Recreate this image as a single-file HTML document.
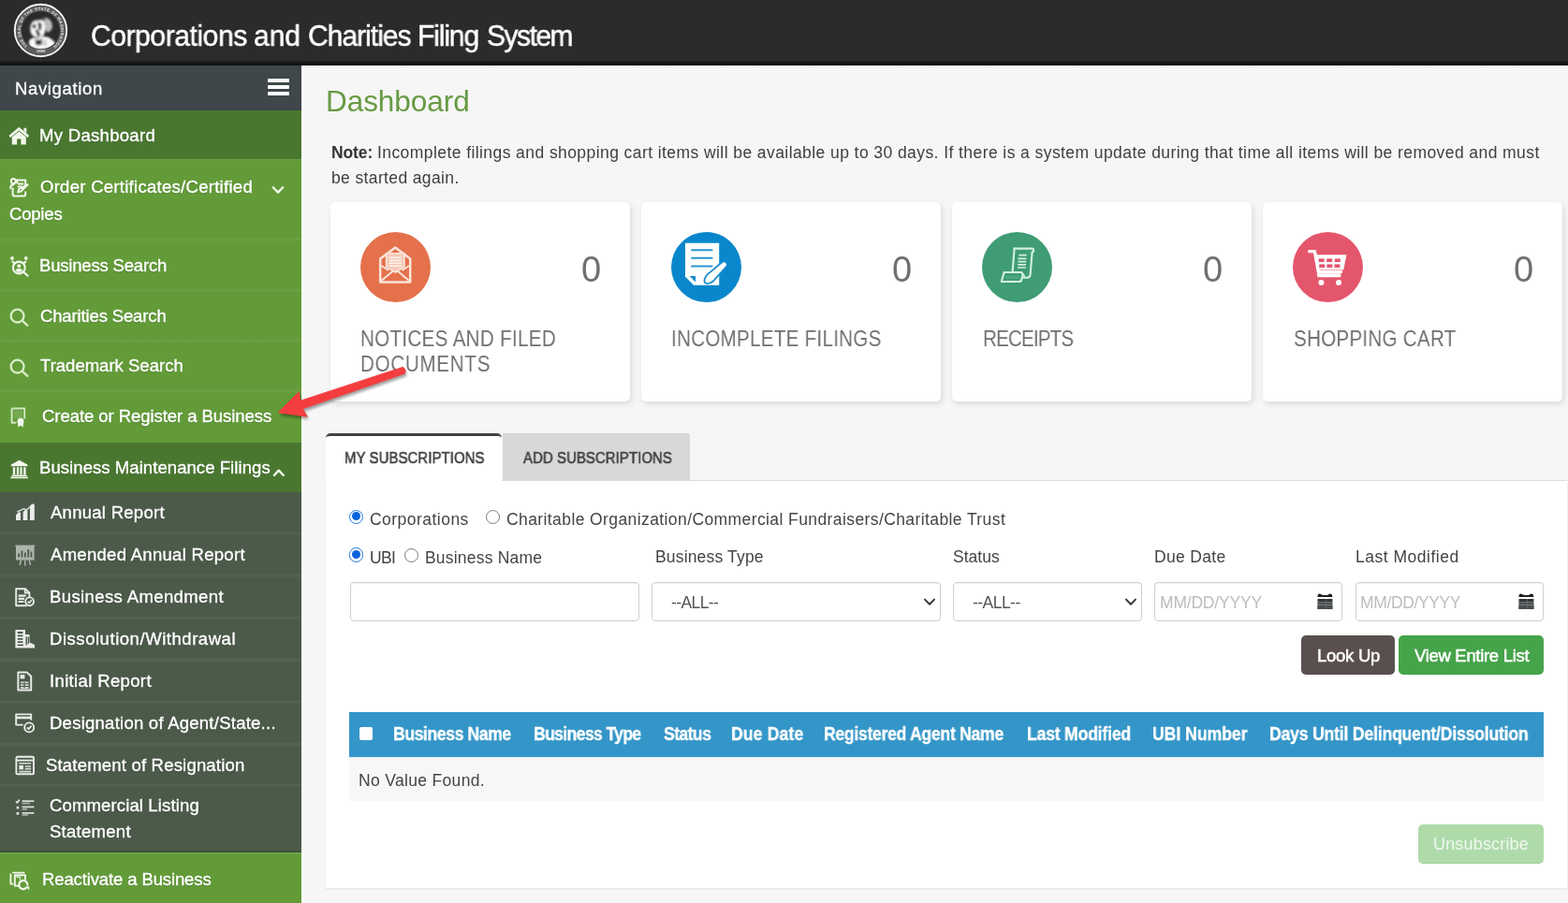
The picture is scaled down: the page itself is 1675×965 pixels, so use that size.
<!DOCTYPE html>
<html lang="en">
<head>
<meta charset="utf-8">
<title>Corporations and Charities Filing System</title>
<style>
*{box-sizing:border-box;margin:0;padding:0}
html,body{width:1675px;height:965px;overflow:hidden;background:#f6f6f6;font-family:"Liberation Sans",sans-serif}
.a{position:absolute}
.t{position:absolute;white-space:pre;font-family:"Liberation Sans",sans-serif;will-change:transform}
#hdr{left:0;top:0;width:1675px;height:70px;background:#2b2b2b}
#side{left:0;top:70px;width:321.6px;height:895px;background:#629b38;overflow:hidden}
.nb{position:absolute;left:0;width:322px}
.sep{position:absolute;left:0;width:322px;height:2px}
.sp{position:absolute;left:0;width:322px;height:4.6px;background:linear-gradient(rgba(255,255,255,0),rgba(255,255,255,.045) 30%,rgba(255,255,255,.05) 75%,rgba(255,255,255,0))}
.card{position:absolute;top:216px;width:320px;height:213px;background:#fff;border-radius:5px;box-shadow:2px 3px 6px rgba(0,0,0,.11),0 0 1px rgba(0,0,0,.05)}
.circ{position:absolute;top:32px;left:32px;width:75px;height:75px;border-radius:50%}
.inp{position:absolute;top:622px;height:42px;background:#fff;border:1px solid #cfcfcf;border-radius:4px;box-shadow:inset 0 1px 1px rgba(0,0,0,.05)}
.btn{position:absolute;height:42px;border-radius:5px}
.radio{position:absolute;width:15.2px;height:15.2px;border-radius:50%;background:#fff;border:1.3px solid #7a7a7a}
.radio.on{width:15.6px;height:15.6px;border:1.5px solid #2474e2}
.radio.on::after{content:"";position:absolute;left:1.8px;top:1.8px;width:9px;height:9px;border-radius:50%;background:#0a63dc}
svg{position:absolute;overflow:visible}
</style>
</head>
<body>
<header>
<div class="a" id="hdr"></div>
<div class="a" style="left:0;top:65px;width:1675px;height:5px;background:linear-gradient(#262626,#151515 40%,#101010)"></div>
<div class="a" style="left:322px;top:70px;width:1353px;height:2px;background:linear-gradient(#fff,#f9f9f9)"></div>
<div class="a" style="left:322px;top:70px;width:4px;height:895px;background:linear-gradient(90deg,#fff,#fbfbfb 60%,#f6f6f6)"></div>
<svg class="a" style="left:14px;top:3px" width="59" height="59" viewBox="0 0 59 59" >
<defs><path id="sealarc" d="M 16.14 46.60 A 21.7 21.7 0 1 1 42.86 46.60"/>
<filter id="lb" x="-30%" y="-30%" width="160%" height="160%"><feGaussianBlur stdDeviation="0.95"/></filter>
<filter id="lb2" x="-30%" y="-30%" width="160%" height="160%"><feGaussianBlur stdDeviation="0.5"/></filter>
<clipPath id="lc"><circle cx="29.5" cy="29.5" r="20"/></clipPath></defs>
<circle cx="29.5" cy="29.5" r="27.7" fill="#4a4a4a" stroke="#f6f6f6" stroke-width="1.9"/>
<circle cx="29.5" cy="29.5" r="23.4" fill="none" stroke="#5e5e5e" stroke-width="5.4"/>
<circle cx="29.5" cy="29.5" r="20.3" fill="#2b2b2b"/>
<g filter="url(#lb2)" opacity=".85"><text font-family="'Liberation Sans',sans-serif" font-size="4.3" font-weight="700" fill="#fff" textLength="105.6" lengthAdjust="spacing"><textPath href="#sealarc" startOffset="1" textLength="105.6" lengthAdjust="spacing">THE SEAL OF THE STATE OF WASHINGTON</textPath></text>
<text x="29.6" y="52.6" text-anchor="middle" font-family="'Liberation Sans',sans-serif" font-size="4.3" font-weight="700" fill="#fff">1889</text></g>
<g clip-path="url(#lc)"><g filter="url(#lb)">
<path d="M19.5 22 C21 19.5 24 18.5 27 19 C30 17 33 18 34 20.5 C35 24 35 28 34 31 C33.5 34 32 36 29.5 36.5 C26 37.5 22 36.5 20 34 C18 31 17.8 25.5 19.5 22 Z" fill="#fafafa"/>
<path d="M33 16 C37.5 15.5 41.5 19 42 24.5 C42.2 27.5 40.5 30 37.5 31.5 C35.8 32 35 30 35 27 C35 23 34.4 19.5 33 16 Z" fill="#bdbdbd"/>
<path d="M17.5 39.8 C20 37 23.5 36.4 26 38 C29 35.6 34 35.2 38 37 C42 39 45 42 46 45 C40 50.5 26 51.5 18.5 47 C16.5 44.5 16.5 41.5 17.5 39.8 Z" fill="#fafafa"/>
<path d="M20.4 23.6 C21.8 22.2 23.8 22.4 24.6 23.8 L24 27.4 C22.8 26.6 21.6 26.8 20.8 27.8 Z M26 21.5 C27.4 20.6 29.6 21 30.6 22.6 L30 29.6 C28.8 28.6 27.6 28.4 26.6 29 L27.2 25 Z M23.4 29.6 L26.4 28.6 L29.6 34.6 L26.6 36.4 Z" fill="#2b2b2b" opacity=".92"/>
<path d="M23.6 38.4 C25.6 40.4 28.4 40.4 30.6 38 L31.4 43.4 C29 45.8 25.6 45.8 24 44.4 Z" fill="#2b2b2b" opacity=".95"/>
<path d="M30 41 L35 38.6 L37 45.6 L32.6 47 Z" fill="#d6d6d6"/>
<path d="M21 12.5 C24 10.5 29 10.5 32.4 13 L31.6 19 C27 17.6 23 18.6 20.5 20.5 Z" fill="#2b2b2b" opacity=".7"/>
</g></g>
</svg>
<span class="t" style="left:96.93px;top:19.00px;font-size:31px;line-height:40px;color:#fff;letter-spacing:-0.460px;-webkit-text-stroke:0.45px #fff;transform:scaleX(0.97);transform-origin:0 0;">Corporations</span>
<span class="t" style="left:271.13px;top:19.00px;font-size:31px;line-height:40px;color:#fff;letter-spacing:-0.108px;-webkit-text-stroke:0.45px #fff;transform:scaleX(0.97);transform-origin:0 0;">and</span>
<span class="t" style="left:328.53px;top:19.00px;font-size:31px;line-height:40px;color:#fff;letter-spacing:-1.044px;-webkit-text-stroke:0.45px #fff;transform:scaleX(0.97);transform-origin:0 0;">Charities</span>
<span class="t" style="left:446.26px;top:19.00px;font-size:31px;line-height:40px;color:#fff;letter-spacing:-1.181px;-webkit-text-stroke:0.45px #fff;transform:scaleX(0.97);transform-origin:0 0;">Filing</span>
<span class="t" style="left:520.43px;top:19.00px;font-size:31px;line-height:40px;color:#fff;letter-spacing:-1.592px;-webkit-text-stroke:0.45px #fff;transform:scaleX(0.97);transform-origin:0 0;">System</span>
</header>
<nav>
<div class="a" id="side">
  <div class="nb" style="top:0;height:47.6px;background:#3f474a"></div>
  <div class="nb" style="top:47.6px;height:52.4px;background:#4a7730"></div>
  <div class="sep" style="top:100px;background:linear-gradient(rgba(255,255,255,.09),rgba(255,255,255,0))"></div>
  <div class="nb" style="top:403px;height:53px;background:#4a7730"></div>
  <div class="nb" style="top:456px;height:385px;background:#4b5a49"></div>
  <div class="nb" style="top:839px;height:2px;background:rgba(40,60,30,.35)"></div>
  <div class="sep" style="top:841px;background:linear-gradient(rgba(255,255,255,.16),rgba(255,255,255,0))"></div>
  <div class="sp" style="top:183.0px"></div>
  <div class="sp" style="top:237.6px"></div>
  <div class="sp" style="top:291.6px"></div>
  <div class="sp" style="top:345.0px"></div>
  <div class="sp" style="top:497.6px"></div>
  <div class="sp" style="top:542.5px"></div>
  <div class="sp" style="top:587.5px"></div>
  <div class="sp" style="top:633.0px"></div>
  <div class="sp" style="top:677.5px"></div>
  <div class="sp" style="top:723.0px"></div>
  <div class="sp" style="top:766.5px"></div>
</div>
<div class="a" style="left:286px;top:83.7px;width:22.6px;height:4.6px;background:#fff;border-radius:1px"></div><div class="a" style="left:286px;top:90.6px;width:22.6px;height:4.6px;background:#fff;border-radius:1px"></div><div class="a" style="left:286px;top:97.6px;width:22.6px;height:4.6px;background:#fff;border-radius:1px"></div>
<svg class="a" style="left:10px;top:135px" width="22" height="21" viewBox="0 0 22 21" >
<path d="M10.3 0.8 L21.2 10 L19.4 12 L10.3 4.6 L1.2 12 L-0.6 10 Z" fill="#f2f7ec"/>
<path d="M15.4 1.8 h2.9 v5.4 l-2.9 -2.5 Z" fill="#f2f7ec"/>
<path d="M2.8 11.6 L10.3 5.6 L17.8 11.6 V19.5 H12.4 V13.6 H8.2 V19.5 H2.8 Z" fill="#f2f7ec"/>
</svg>
<svg class="a" style="left:10px;top:189px" width="22" height="23" viewBox="0 0 22 23" >
<g fill="none" stroke="#f2f7ec" stroke-width="2" stroke-linecap="round" stroke-linejoin="round">
<circle cx="4.3" cy="4.6" r="2.5"/>
<path d="M1.2 12.2 C1.2 9.4 2.6 8.3 4.6 8.3"/>
<path d="M8.2 3.4 H17.2 V8.2"/>
<path d="M8.2 3.4 V6.2"/>
<path d="M9.6 7.4 H14.4 M9.6 10.6 H13"/>
<path d="M3.6 12.2 V18.8 C3.6 20 4.4 20.6 5.6 20.6 H15.4 C16.6 20.6 17.2 20 17.2 18.8 V16.2"/>
<path d="M19.6 8.2 L12.4 15.6 L9.2 16.4 L10 13.4 Z"/>
</g></svg>
<svg class="a" style="left:9.5px;top:273px" width="22" height="23" viewBox="0 0 22 23" >
<g fill="none" stroke="#f2f7ec" stroke-width="2.1" stroke-linecap="round">
<circle cx="10.3" cy="13" r="6.4"/>
<path d="M15.2 17.8 L19.6 21.6"/>
<path d="M3.4 6.6 L5.6 8.4 M17.4 6.6 L15.2 8.4"/>
</g>
<circle cx="3" cy="3" r="1.9" fill="#f2f7ec"/><circle cx="17.8" cy="3" r="1.9" fill="#f2f7ec"/>
<circle cx="10.3" cy="11.2" r="1.9" fill="#f2f7ec"/>
<path d="M6.6 16.6 C7 14.4 8.6 13.8 10.3 13.8 C12 13.8 13.6 14.4 14 16.6 C12 18.4 8.6 18.4 6.6 16.6 Z" fill="#f2f7ec"/>
</svg>
<svg class="a" style="left:10px;top:327.5px" width="22" height="22" viewBox="0 0 22 22" >
<g fill="none" stroke="#d9ecc6" stroke-width="2.3" stroke-linecap="round">
<circle cx="8.6" cy="9.6" r="6.9"/><path d="M13.8 14.6 L19.4 19.8"/></g></svg>
<svg class="a" style="left:10px;top:381.5px" width="22" height="22" viewBox="0 0 22 22" >
<g fill="none" stroke="#d9ecc6" stroke-width="2.3" stroke-linecap="round">
<circle cx="8.6" cy="9.6" r="6.9"/><path d="M13.8 14.6 L19.4 19.8"/></g></svg>
<svg class="a" style="left:11px;top:435px" width="18" height="23" viewBox="0 0 18 23" >
<path d="M1.6 1.6 H15.2 V12.4 M1.6 1.6 V16.8 H6.4" fill="none" stroke="#cfe6bb" stroke-width="2" stroke-linejoin="round"/>
<rect x="3.6" y="3.8" width="9.4" height="8" fill="#88b768" opacity=".55"/>
<circle cx="11" cy="15.2" r="3.5" fill="#f2f7ec"/>
<path d="M8.2 16.4 V21.6 L11 19.8 L13.8 21.6 V16.4 Z" fill="#f2f7ec"/>
</svg>
<svg class="a" style="left:10.5px;top:491px" width="20" height="21" viewBox="0 0 20 21" >
<path d="M9.6 0.8 L18.4 5.6 V7.2 H0.8 V5.6 Z" fill="#f2f7ec"/>
<path d="M2.8 8.2 h2.4 v8 h-2.4 Z M6.9 8.2 h2.2 v8 h-2.2 Z M10.4 8.2 h2.2 v8 h-2.2 Z M14.2 8.2 h2.4 v8 h-2.4 Z" fill="#f2f7ec"/>
<path d="M1.6 16.6 H17.6 V18 H1.6 Z M0.4 18.6 H18.8 V20.2 H0.4 Z" fill="#f2f7ec"/>
</svg>
<svg class="a" style="left:290px;top:198px" width="14" height="11" viewBox="0 0 14 11" ><path d="M1.8 2.2 L7 7.6 L12.2 2.2" fill="none" stroke="#f2f7ec" stroke-width="2.3" stroke-linecap="round" stroke-linejoin="round"/></svg>
<svg class="a" style="left:290.5px;top:500px" width="14" height="11" viewBox="0 0 14 11" ><path d="M1.8 8 L6.8 2.6 L11.8 8" fill="none" stroke="#f2f7ec" stroke-width="2.3" stroke-linecap="round" stroke-linejoin="round"/></svg>
<svg class="a" style="left:16px;top:538px" width="22" height="19" viewBox="0 0 22 19" >
<path d="M1 12.4 L3.6 9.6 H6 V18 H1 Z M8.6 9.6 L10.4 7.2 H13.4 V18 H8.6 Z M16 2.4 L18.4 0.8 H20.8 V18 H16 Z" fill="#e9ece8"/>
<path d="M2.4 9 L9.6 5.6 L12 7 L19.6 0.8" fill="none" stroke="#e9ece8" stroke-width="1.5" opacity=".85"/>
</svg>
<svg class="a" style="left:16px;top:582px" width="22" height="24" viewBox="0 0 22 24" >
<g opacity=".62"><rect x="1" y="2" width="19.6" height="14.6" fill="#e9ece8"/>
<path d="M4 13.6 V9.6 M7.4 13.6 V6.6 M10.8 13.6 V8.4 M14.2 13.6 V5 M17.4 13.6 V7.6" stroke="#4b5a49" stroke-width="1.8" fill="none"/>
<path d="M6.4 17 L5 22 M10.8 17 V22.6 M15.2 17 L16.6 22" stroke="#e9ece8" stroke-width="1.5" fill="none"/>
<path d="M0.4 1.4 H21.2" stroke="#e9ece8" stroke-width="1.7"/></g>
</svg>
<svg class="a" style="left:16px;top:628px" width="22" height="21" viewBox="0 0 22 21" >
<g fill="none" stroke="#e9ece8" stroke-width="1.9" stroke-linejoin="round">
<path d="M12.6 19.2 H1.2 V1.2 H11 L15.4 5.4 V10"/>
<path d="M10.8 1.4 V5.6 H15"/>
<path d="M3.6 8.6 H11.6 M3.6 11.8 H10 M3.6 15 H9.4" stroke-width="2.2"/>
<circle cx="15.6" cy="14.8" r="4.4"/>
<path d="M13.6 14.8 L15.2 16.4 L17.8 13.4" stroke-width="1.7"/>
</g></svg>
<svg class="a" style="left:16px;top:672px" width="22" height="22" viewBox="0 0 22 22" >
<path d="M0.4 1 H11 V6 H15.6 V14.6 L21 17 V20.6 H0.4 Z" fill="#e9ece8"/>
<path d="M2.8 4 H8.4 M2.8 7.4 H8.4 M2.8 10.8 H8.4 M2.8 14.2 H8.4" stroke="#4b5a49" stroke-width="1.8"/>
<path d="M12.2 8.6 V17.6 M14.4 8.6 V16" stroke="#4b5a49" stroke-width="1.4"/>
<path d="M2.6 17.4 H9" stroke="#4b5a49" stroke-width="1.5"/>
</svg>
<svg class="a" style="left:17.5px;top:717px" width="18" height="23" viewBox="0 0 18 23" >
<path d="M1.4 1.4 H10.6 L15.2 5.8 V20.4 H1.4 Z" fill="none" stroke="#e9ece8" stroke-width="2" stroke-linejoin="round"/>
<path d="M3.6 4 H8.4 V8.4 H3.6 Z" fill="#e9ece8"/>
<path d="M4 12.4 H12.6 M4 15.2 H12.6 M4 18 H12.6" stroke="#e9ece8" stroke-width="1.8" opacity=".85"/>
<path d="M8 12.4 V18" stroke="#4b5a49" stroke-width="1.3"/>
</svg>
<svg class="a" style="left:15.5px;top:762px" width="23" height="23" viewBox="0 0 23 23" >
<g fill="none" stroke="#e9ece8" stroke-width="1.9" stroke-linejoin="round">
<path d="M8.6 12.6 H1.2 V1.4 H17.2 V7.6"/>
<path d="M1.2 5 H17.2" stroke-width="2.6"/>
<circle cx="15.2" cy="15.4" r="5"/>
<path d="M12.8 15.4 L14.6 17.2 L17.6 13.6" stroke-width="1.8"/>
</g></svg>
<svg class="a" style="left:15.5px;top:807px" width="22" height="22" viewBox="0 0 22 22" >
<rect x="1.4" y="1.8" width="18.6" height="18.4" rx="1" fill="none" stroke="#e9ece8" stroke-width="1.9"/>
<path d="M1.4 5.6 H20" stroke="#e9ece8" stroke-width="1.9"/>
<path d="M4.4 8.8 H17.2 M10.6 12 H17.2 M10.6 14.6 H17.2 M4.4 17.6 H17.2" stroke="#e9ece8" stroke-width="1.6" opacity=".9"/>
<rect x="4.4" y="10.8" width="4.6" height="4.6" fill="#e9ece8"/>
<path d="M4 0.8 V2.6 M7 0.8 V2.6 M10 0.8 V2.6 M13 0.8 V2.6 M16 0.8 V2.6" stroke="#e9ece8" stroke-width="1.3" opacity=".7"/>
</svg>
<svg class="a" style="left:16px;top:852px" width="23" height="21" viewBox="0 0 23 21" >
<g stroke="#e9ece8" fill="none" opacity=".9">
<path d="M7.6 4.2 H20.4 M7.6 10.4 H20.4 M7.6 16.8 H20.4" stroke-width="1.8"/>
<path d="M7.6 6.6 H16 M7.6 12.8 H13 M7.6 19 H14" stroke-width="1.5" opacity=".7"/>
<path d="M1 4.4 L2.4 5.8 L4.8 2.6" stroke-width="1.8"/>
</g>
<rect x="1.6" y="9.8" width="2.6" height="2.6" fill="#e9ece8"/><rect x="1.6" y="16" width="2.6" height="2.6" fill="#e9ece8"/>
</svg>
<svg class="a" style="left:9.5px;top:930px" width="23" height="22" viewBox="0 0 23 22" >
<g fill="none" stroke="#f2f7ec" stroke-width="1.9" stroke-linejoin="round" stroke-linecap="round">
<path d="M1.4 4.4 V14.6 H3.6"/>
<path d="M4 2.6 H15.6"/>
<path d="M10.4 16.6 H5.8 V5.2 H17 V9.6"/>
<path d="M7.8 7.2 H11.4 V10" stroke-width="1.5" opacity=".8"/>
<path d="M19.4 15.6 A4.6 4.6 0 1 0 17.6 19.2" stroke-width="2.2"/>
</g>
<path d="M17 17.2 H21.2 V21.2 Z" fill="#f2f7ec"/>
</svg>
<span class="t" style="left:16.20px;top:83.00px;font-size:18.5px;line-height:24px;color:#fff;letter-spacing:0.652px;-webkit-text-stroke:0.3px #fff;">Navigation</span>
<span class="t" style="left:41.80px;top:133.00px;font-size:18.5px;line-height:24px;color:#fff;letter-spacing:0.307px;text-shadow:0 1px 1px rgba(0,0,0,.22);-webkit-text-stroke:0.35px #fff;">My Dashboard</span>
<span class="t" style="left:42.80px;top:188.00px;font-size:18.5px;line-height:24px;color:#fff;letter-spacing:0.285px;text-shadow:0 1px 1px rgba(0,0,0,.22);-webkit-text-stroke:0.35px #fff;">Order Certificates/Certified</span>
<span class="t" style="left:9.80px;top:217.00px;font-size:18.5px;line-height:24px;color:#fff;letter-spacing:-0.189px;text-shadow:0 1px 1px rgba(0,0,0,.22);-webkit-text-stroke:0.35px #fff;">Copies</span>
<span class="t" style="left:41.80px;top:272.00px;font-size:18.5px;line-height:24px;color:#fff;letter-spacing:-0.181px;text-shadow:0 1px 1px rgba(0,0,0,.22);-webkit-text-stroke:0.35px #fff;">Business Search</span>
<span class="t" style="left:42.80px;top:326.00px;font-size:18.5px;line-height:24px;color:#fff;letter-spacing:-0.138px;text-shadow:0 1px 1px rgba(0,0,0,.22);-webkit-text-stroke:0.35px #fff;">Charities Search</span>
<span class="t" style="left:42.80px;top:379.00px;font-size:18.5px;line-height:24px;color:#fff;letter-spacing:0.012px;text-shadow:0 1px 1px rgba(0,0,0,.22);-webkit-text-stroke:0.35px #fff;">Trademark Search</span>
<span class="t" style="left:45.20px;top:433.00px;font-size:18.5px;line-height:24px;color:#fff;letter-spacing:-0.055px;text-shadow:0 1px 1px rgba(0,0,0,.22);-webkit-text-stroke:0.35px #fff;">Create or Register a Business</span>
<span class="t" style="left:41.80px;top:488.00px;font-size:18.5px;line-height:24px;color:#fff;letter-spacing:0.070px;text-shadow:0 1px 1px rgba(0,0,0,.22);-webkit-text-stroke:0.35px #fff;">Business Maintenance Filings</span>
<span class="t" style="left:53.80px;top:536.00px;font-size:18.5px;line-height:24px;color:#fff;letter-spacing:0.272px;text-shadow:0 1px 1px rgba(0,0,0,.22);-webkit-text-stroke:0.35px #fff;">Annual Report</span>
<span class="t" style="left:53.80px;top:581.00px;font-size:18.5px;line-height:24px;color:#fff;letter-spacing:0.297px;text-shadow:0 1px 1px rgba(0,0,0,.22);-webkit-text-stroke:0.35px #fff;">Amended Annual Report</span>
<span class="t" style="left:52.80px;top:626.00px;font-size:18.5px;line-height:24px;color:#fff;letter-spacing:0.388px;text-shadow:0 1px 1px rgba(0,0,0,.22);-webkit-text-stroke:0.35px #fff;">Business Amendment</span>
<span class="t" style="left:52.80px;top:671.00px;font-size:18.5px;line-height:24px;color:#fff;letter-spacing:0.542px;text-shadow:0 1px 1px rgba(0,0,0,.22);-webkit-text-stroke:0.35px #fff;">Dissolution/Withdrawal</span>
<span class="t" style="left:52.80px;top:716.00px;font-size:18.5px;line-height:24px;color:#fff;letter-spacing:0.360px;text-shadow:0 1px 1px rgba(0,0,0,.22);-webkit-text-stroke:0.35px #fff;">Initial Report</span>
<span class="t" style="left:52.80px;top:761.00px;font-size:18.5px;line-height:24px;color:#fff;letter-spacing:0.251px;text-shadow:0 1px 1px rgba(0,0,0,.22);-webkit-text-stroke:0.35px #fff;">Designation of Agent/State...</span>
<span class="t" style="left:49.20px;top:806.00px;font-size:18.5px;line-height:24px;color:#fff;letter-spacing:0.197px;text-shadow:0 1px 1px rgba(0,0,0,.22);-webkit-text-stroke:0.35px #fff;">Statement of Resignation</span>
<span class="t" style="left:52.80px;top:849.00px;font-size:18.5px;line-height:24px;color:#fff;letter-spacing:0.141px;text-shadow:0 1px 1px rgba(0,0,0,.22);-webkit-text-stroke:0.35px #fff;">Commercial Listing</span>
<span class="t" style="left:52.80px;top:877.00px;font-size:18.5px;line-height:24px;color:#fff;letter-spacing:0.276px;text-shadow:0 1px 1px rgba(0,0,0,.22);-webkit-text-stroke:0.35px #fff;">Statement</span>
<span class="t" style="left:44.80px;top:928.00px;font-size:18.5px;line-height:24px;color:#fff;letter-spacing:-0.120px;text-shadow:0 1px 1px rgba(0,0,0,.22);-webkit-text-stroke:0.35px #fff;">Reactivate a Business</span>
</nav>
<main>

<!-- cards -->
<div class="card" style="left:353px"><div class="circ" style="background:#e4714b"></div></div>
<div class="card" style="left:685px"><div class="circ" style="background:#0a87cc"></div></div>
<div class="card" style="left:1017px"><div class="circ" style="background:#3f9c75"></div></div>
<div class="card" style="left:1349px"><div class="circ" style="background:#e4566c"></div></div>
<svg class="a" style="left:385.25px;top:248px" width="75" height="75" viewBox="0 0 75 75" >
<path d="M37.3 16.6 L53.2 28.6 V53.4 H21.2 V28.6 Z" fill="none" stroke="#fbe4da" stroke-width="2.5" stroke-linejoin="round"/>
<path d="M27.6 22.8 H47 V37.4 L37.3 43 L27.6 37.4 Z" fill="#f6c9b6" stroke="#fbe4da" stroke-width="1.6"/>
<path d="M30.6 27.2 H44 M30.6 30.2 H44 M30.6 33.2 H44 M30.6 36.2 H44" stroke="#fdf1ec" stroke-width="1.4"/>
<path d="M22.4 52 L35 41.4 M52 52 L39.6 41.4 M22.4 36 L30 41 M52 36 L44.6 41" stroke="#fbe4da" stroke-width="2" fill="none"/>
</svg>
<svg class="a" style="left:717px;top:248px" width="75" height="75" viewBox="0 0 75 75" >
<path d="M15 11.8 H51.2 V56.8 H24 L15 47.8 Z" fill="#fff"/>
<path d="M22 19.2 H43.6 M22 27.8 H43.6 M22 36.4 H43.6" stroke="#2a93d0" stroke-width="2" stroke-linecap="round"/>
<path d="M19.6 47 H26 V53.6 Z" fill="#1a8bcc"/>
<path d="M54.8 31.8 C57.2 30 61.2 33.8 59.4 36.4 L45.4 52 C42.8 54.6 38.2 56 36.2 54.2 C34.6 52.2 36 48 38.6 45.4 Z" fill="#fff" stroke="#1a8bcc" stroke-width="1.8" stroke-linejoin="round"/>
</svg>
<svg class="a" style="left:1049px;top:248px" width="75" height="75" viewBox="0 0 75 75" >
<g fill="none" stroke="#d3f0e0" stroke-width="2.1" stroke-linejoin="round" stroke-linecap="round">
<path d="M34.6 17.6 H53.6 C55.6 17.6 55.6 21.4 53.6 21.4 L51.6 45.6 C51.4 48.2 49.6 48.8 47 48.8 H44"/>
<path d="M34.6 17.6 L32.6 42.6"/>
<path d="M23.6 43 H41.6 C43.6 43 43.6 45 43.2 47 L42.2 51 C42 52.6 41 53 39.6 53 H20.8 Z"/>
<path d="M43.2 45 C44.6 45 45.6 46 45.2 48.6" stroke-width="1.4"/>
</g>
<path d="M39.4 24.6 H47.6 M38.6 28.4 H47.4 M38.4 31.6 H47.2 M38.2 34.8 H47 M38 38 H46.8" stroke="#d3f0e0" stroke-width="1.7"/>
<path d="M25.4 46.4 H39.4 V50 H24.6 Z" fill="#58ab88" opacity=".6"/>
</svg>
<svg class="a" style="left:1381px;top:248px" width="75" height="75" viewBox="0 0 75 75" >
<path d="M17.6 20.6 H23.4 L27.4 42.6 H51.6" fill="none" stroke="#fff" stroke-width="3.4" stroke-linecap="round" stroke-linejoin="round"/>
<path d="M23.6 24.2 H57.4 L54.2 40.6 H26.8 Z" fill="#fff"/>
<path d="M25.6 44.2 H51.4 V48.2 H26.4 Z" fill="#fff"/>
<g fill="#e4566c"><rect x="27.6" y="28.4" width="6" height="3.6"/><rect x="36.2" y="28.4" width="6" height="3.6"/><rect x="44.8" y="28.4" width="6" height="3.6"/>
<rect x="28.2" y="34.4" width="6" height="3.6"/><rect x="36.4" y="34.4" width="6" height="3.6"/><rect x="44.4" y="34.4" width="6" height="3.6"/></g>
<circle cx="30.4" cy="54" r="3" fill="#fff"/><circle cx="49" cy="54" r="3" fill="#fff"/>
</svg>

<!-- tabs + panel -->
<div class="a" style="left:347.5px;top:513px;width:1326.5px;height:436px;background:#fff;border-top:1px solid #ddd;box-shadow:0 1px 2px rgba(0,0,0,.09)"></div>
<div class="a" style="left:348px;top:463px;width:188px;height:51px;background:#fff;border-top:3px solid #444;border-radius:5px 5px 0 0"></div>
<div class="a" style="left:537px;top:463px;width:200px;height:50px;background:#d8d8d8;border-radius:0 2px 0 0"></div>

<!-- radios -->
<div class="radio on" style="left:372.9px;top:544.5px"></div>
<div class="radio" style="left:518.8px;top:544.6px"></div>
<div class="radio on" style="left:372.9px;top:585.4px"></div>
<div class="radio" style="left:431.9px;top:585.8px"></div>

<!-- inputs -->
<div class="inp" style="left:373.5px;width:309px"></div>
<div class="inp" style="left:695.5px;width:309px"></div>
<div class="inp" style="left:1017.5px;width:202px"></div>
<div class="inp" style="left:1232.5px;width:201px"></div>
<div class="inp" style="left:1447.5px;width:201px"></div>
<svg class="a" style="left:986px;top:638px" width="14" height="11" viewBox="0 0 14 11" ><path d="M2 2.6 L7 7.8 L12 2.6" fill="none" stroke="#3a3a3a" stroke-width="2" stroke-linecap="round" stroke-linejoin="round"/></svg>
<svg class="a" style="left:1201px;top:638px" width="14" height="11" viewBox="0 0 14 11" ><path d="M2 2.6 L7 7.8 L12 2.6" fill="none" stroke="#3a3a3a" stroke-width="2" stroke-linecap="round" stroke-linejoin="round"/></svg>
<svg class="a" style="left:1407px;top:634px" width="17" height="18" viewBox="0 0 17 18" >
<path d="M0.8 1.4 C1.6 0.4 3.4 0.4 4.4 1.2 C6.4 2.4 10.2 2.4 12.2 1.2 C13.2 0.4 15 0.4 15.8 1.4 L16.4 4 H0.4 Z" fill="#1f1f1f"/>
<path d="M0.5 6 H16.4 V16.9 H0.5 Z" fill="#333638"/>
<path d="M0.5 9.9 H16.4 M0.5 12.3 H16.4" stroke="#a5a8a8" stroke-width="0.8"/>
<path d="M0.5 13 H16.4 V16.9 H0.5 Z" fill="#4a4d4e"/>
<path d="M9.7 6 V16.9" stroke="#6b6e6e" stroke-width="0.9"/>
</svg>
<svg class="a" style="left:1621.6px;top:634px" width="17" height="18" viewBox="0 0 17 18" >
<path d="M0.8 1.4 C1.6 0.4 3.4 0.4 4.4 1.2 C6.4 2.4 10.2 2.4 12.2 1.2 C13.2 0.4 15 0.4 15.8 1.4 L16.4 4 H0.4 Z" fill="#1f1f1f"/>
<path d="M0.5 6 H16.4 V16.9 H0.5 Z" fill="#333638"/>
<path d="M0.5 9.9 H16.4 M0.5 12.3 H16.4" stroke="#a5a8a8" stroke-width="0.8"/>
<path d="M0.5 13 H16.4 V16.9 H0.5 Z" fill="#4a4d4e"/>
<path d="M9.7 6 V16.9" stroke="#6b6e6e" stroke-width="0.9"/>
</svg>

<!-- buttons -->
<div class="btn" style="left:1390px;top:679px;width:100px;background:#5a4f4f"></div>
<div class="btn" style="left:1494px;top:679px;width:155px;background:#45a34a"></div>
<div class="btn" style="left:1515px;top:881px;width:134px;background:#afdbab;border-bottom:1px solid #a3d09f"></div>

<!-- table -->
<div class="a" style="left:373px;top:761px;width:1276px;height:48px;background:#3496c8"></div>
<div class="a" style="left:373px;top:809px;width:1276px;height:47px;background:#f7f7f7;border-top:2px solid #eef3f6"></div>
<div class="a" style="left:384px;top:777px;width:14px;height:14px;background:#fff;border-radius:2px"></div>

<span class="t" style="left:347.80px;top:88.00px;font-size:31.5px;line-height:41px;color:#679a44;letter-spacing:-0.049px;">Dashboard</span>
<span class="t" style="left:353.60px;top:152.00px;font-size:17.5px;line-height:23px;color:#333;letter-spacing:-0.123px;font-weight:700;">Note:</span>
<span class="t" style="left:402.60px;top:152.00px;font-size:17.5px;line-height:23px;color:#3f3f3f;letter-spacing:0.424px;">Incomplete filings and shopping cart items will be available up to 30 days. If there is a system update during that time all items will be removed and must</span>
<span class="t" style="left:353.60px;top:179.00px;font-size:17.5px;line-height:23px;color:#3f3f3f;letter-spacing:0.368px;">be started again.</span>
<span class="t" style="left:385.32px;top:346.00px;font-size:24.5px;line-height:32px;color:#707070;letter-spacing:0.380px;transform:scaleX(0.84);transform-origin:0 0;">NOTICES AND FILED</span>
<span class="t" style="left:385.32px;top:373.00px;font-size:24.5px;line-height:32px;color:#707070;letter-spacing:0.854px;transform:scaleX(0.84);transform-origin:0 0;">DOCUMENTS</span>
<span class="t" style="left:717.32px;top:346.00px;font-size:24.5px;line-height:32px;color:#707070;letter-spacing:0.336px;transform:scaleX(0.84);transform-origin:0 0;">INCOMPLETE FILINGS</span>
<span class="t" style="left:1049.52px;top:346.00px;font-size:24.5px;line-height:32px;color:#707070;letter-spacing:-0.980px;transform:scaleX(0.84);transform-origin:0 0;">RECEIPTS</span>
<span class="t" style="left:1381.56px;top:346.00px;font-size:24.5px;line-height:32px;color:#707070;letter-spacing:0.318px;transform:scaleX(0.84);transform-origin:0 0;">SHOPPING CART</span>
<span class="t" style="left:620.60px;top:264.00px;font-size:38px;line-height:49px;color:#707070;letter-spacing:0.000px;">0</span>
<span class="t" style="left:952.60px;top:264.00px;font-size:38px;line-height:49px;color:#707070;letter-spacing:0.000px;">0</span>
<span class="t" style="left:1284.60px;top:264.00px;font-size:38px;line-height:49px;color:#707070;letter-spacing:0.000px;">0</span>
<span class="t" style="left:1616.60px;top:264.00px;font-size:38px;line-height:49px;color:#707070;letter-spacing:0.000px;">0</span>
<span class="t" style="left:367.70px;top:479.00px;font-size:16.5px;line-height:21px;color:#444;letter-spacing:0.154px;-webkit-text-stroke:0.65px #444;transform:scaleX(0.9);transform-origin:0 0;">MY SUBSCRIPTIONS</span>
<span class="t" style="left:559.40px;top:479.00px;font-size:16.5px;line-height:21px;color:#444;letter-spacing:0.140px;-webkit-text-stroke:0.65px #444;transform:scaleX(0.9);transform-origin:0 0;">ADD SUBSCRIPTIONS</span>
<span class="t" style="left:395.00px;top:544.00px;font-size:17.5px;line-height:23px;color:#444;letter-spacing:0.468px;">Corporations</span>
<span class="t" style="left:540.60px;top:544.00px;font-size:17.5px;line-height:23px;color:#444;letter-spacing:0.404px;">Charitable Organization/Commercial Fundraisers/Charitable Trust</span>
<span class="t" style="left:395.40px;top:585.00px;font-size:17.5px;line-height:23px;color:#444;letter-spacing:-0.713px;">UBI</span>
<span class="t" style="left:453.80px;top:585.00px;font-size:17.5px;line-height:23px;color:#444;letter-spacing:0.198px;">Business Name</span>
<span class="t" style="left:700.20px;top:584.00px;font-size:17.5px;line-height:23px;color:#444;letter-spacing:0.169px;">Business Type</span>
<span class="t" style="left:1018.00px;top:584.00px;font-size:17.5px;line-height:23px;color:#444;letter-spacing:0.025px;">Status</span>
<span class="t" style="left:1232.60px;top:584.00px;font-size:17.5px;line-height:23px;color:#444;letter-spacing:0.314px;">Due Date</span>
<span class="t" style="left:1447.60px;top:584.00px;font-size:17.5px;line-height:23px;color:#444;letter-spacing:0.503px;">Last Modified</span>
<span class="t" style="left:717.00px;top:633.00px;font-size:17.5px;line-height:23px;color:#555;letter-spacing:-0.604px;">--ALL--</span>
<span class="t" style="left:1038.60px;top:633.00px;font-size:17.5px;line-height:23px;color:#555;letter-spacing:-0.538px;">--ALL--</span>
<span class="t" style="left:1238.60px;top:633.00px;font-size:17.5px;line-height:23px;color:#bdbdbd;letter-spacing:-0.199px;">MM/DD/YYYY</span>
<span class="t" style="left:1453.20px;top:633.00px;font-size:17.5px;line-height:23px;color:#bdbdbd;letter-spacing:-0.376px;">MM/DD/YYYY</span>
<span class="t" style="left:1406.80px;top:689.00px;font-size:18.5px;line-height:24px;color:#fff;letter-spacing:-0.270px;-webkit-text-stroke:0.5px #fff;">Look Up</span>
<span class="t" style="left:1510.80px;top:689.00px;font-size:18.5px;line-height:24px;color:#fff;letter-spacing:-0.309px;-webkit-text-stroke:0.5px #fff;">View Entire List</span>
<span class="t" style="left:419.90px;top:772.00px;font-size:19.5px;line-height:25px;color:#fff;letter-spacing:-0.421px;font-weight:700;-webkit-text-stroke:0.35px #fff;transform:scaleX(0.9);transform-origin:0 0;">Business Name</span>
<span class="t" style="left:569.90px;top:772.00px;font-size:19.5px;line-height:25px;color:#fff;letter-spacing:-0.686px;font-weight:700;-webkit-text-stroke:0.35px #fff;transform:scaleX(0.9);transform-origin:0 0;">Business Type</span>
<span class="t" style="left:708.80px;top:772.00px;font-size:19.5px;line-height:25px;color:#fff;letter-spacing:-0.620px;font-weight:700;-webkit-text-stroke:0.35px #fff;transform:scaleX(0.9);transform-origin:0 0;">Status</span>
<span class="t" style="left:780.90px;top:772.00px;font-size:19.5px;line-height:25px;color:#fff;letter-spacing:0.172px;font-weight:700;-webkit-text-stroke:0.35px #fff;transform:scaleX(0.9);transform-origin:0 0;">Due Date</span>
<span class="t" style="left:879.90px;top:772.00px;font-size:19.5px;line-height:25px;color:#fff;letter-spacing:-0.288px;font-weight:700;-webkit-text-stroke:0.35px #fff;transform:scaleX(0.9);transform-origin:0 0;">Registered Agent Name</span>
<span class="t" style="left:1097.30px;top:772.00px;font-size:19.5px;line-height:25px;color:#fff;letter-spacing:-0.184px;font-weight:700;-webkit-text-stroke:0.35px #fff;transform:scaleX(0.9);transform-origin:0 0;">Last Modified</span>
<span class="t" style="left:1230.90px;top:772.00px;font-size:19.5px;line-height:25px;color:#fff;letter-spacing:0.014px;font-weight:700;-webkit-text-stroke:0.35px #fff;transform:scaleX(0.9);transform-origin:0 0;">UBI Number</span>
<span class="t" style="left:1355.90px;top:772.00px;font-size:19.5px;line-height:25px;color:#fff;letter-spacing:-0.176px;font-weight:700;-webkit-text-stroke:0.35px #fff;transform:scaleX(0.9);transform-origin:0 0;">Days Until Delinquent/Dissolution</span>
<span class="t" style="left:383.20px;top:823.00px;font-size:17.5px;line-height:23px;color:#444;letter-spacing:0.330px;">No Value Found.</span>
<span class="t" style="left:1530.60px;top:891.00px;font-size:18px;line-height:23px;color:#f0f8ef;letter-spacing:0.176px;">Unsubscribe</span>
</main>
<svg class="a" style="left:0;top:0;pointer-events:none" width="1675" height="965" viewBox="0 0 1675 965">
<defs><filter id="ash" x="-10%" y="-30%" width="120%" height="170%"><feGaussianBlur stdDeviation="1.6"/></filter></defs>
<path d="M297.3 440.8 L319.4 418.6 L320.5 428.4 L430.0 392.5 Q434.7 394.6 432.2 399.2 L323.3 436.7 L328.3 445.2 Z" fill="#000" opacity=".38" transform="translate(1.5 3)" filter="url(#ash)"/>
<path d="M297.3 440.8 L319.4 418.6 L320.5 428.4 L430.0 392.5 Q434.7 394.6 432.2 399.2 L323.3 436.7 L328.3 445.2 Z" fill="#f43d3f" stroke="#f43d3f" stroke-width="1" stroke-linejoin="round"/>
</svg>
</body>
</html>
